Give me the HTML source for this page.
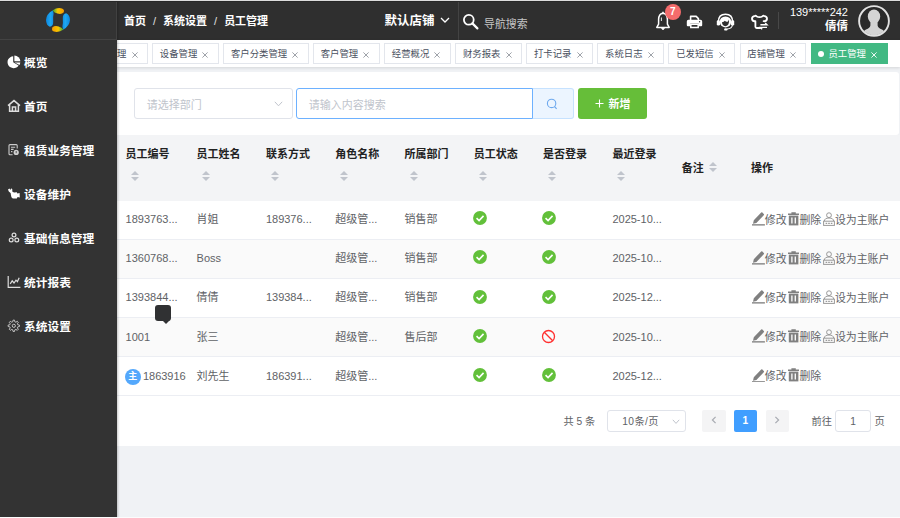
<!DOCTYPE html>
<html lang="zh-CN">
<head>
<meta charset="utf-8">
<title>员工管理</title>
<style>
*{box-sizing:border-box;margin:0;padding:0}
html,body{width:900px;height:518px;overflow:hidden;background:#f0f2f5;font-family:"Liberation Sans","Noto Sans CJK SC",sans-serif;font-size:12px;color:#606266}
#app{position:relative;width:900px;height:518px;overflow:hidden}
.abs{position:absolute}
/* sidebar */
#side{position:absolute;left:0;top:0;width:116.800px;height:518px;background:#333333;box-shadow:1px 0 2px rgba(0,0,0,.22);z-index:5}
#logo{position:absolute;left:0;top:0;width:116.800px;height:40px;border-bottom:1px solid #434343;border-right:1px solid #414141}
.mi{position:absolute;left:0;width:117px;height:20px;color:#fff;font-weight:bold;font-size:11.7px;line-height:20px;white-space:nowrap}
.mi svg{position:absolute;left:6.5px;top:2.8px}
.mi span{position:absolute;left:24.1px;top:1px}
/* header */
#head{position:absolute;left:117px;top:0;width:783px;height:40px;background:#2f2f2f;color:#fff}
#crumb{position:absolute;left:7px;top:0.900px;line-height:40px;font-size:11px;font-weight:bold;white-space:nowrap}
#crumb i{font-style:normal;margin:0 7px;font-weight:normal;color:#e0e0e0}

#shop{left:267.6px;top:1.600px;line-height:39px;font-size:12.500px;font-weight:bold;white-space:nowrap}
#shop svg{margin-left:5px;vertical-align:0.5px}
#navs{left:367px;top:4px;line-height:40px;font-size:10.900px;color:#c6c6c6;white-space:nowrap}
#badge{left:547.7px;top:3.700px;width:16px;height:16px;border-radius:8px;background:#f56c6c;color:#fff;font-size:10px;font-weight:bold;text-align:center;line-height:16px}
#uinfo{right:52px;top:5.600px;text-align:right;font-size:11px;line-height:13px;white-space:nowrap;color:#fff}
#uinfo .un{font-weight:bold;font-size:11.500px;line-height:15px;margin-top:0.600px}
/* tabs */
#tabs{position:absolute;left:117px;top:40px;width:783px;height:27px;overflow:hidden;background:#fff;box-shadow:0 1px 3px rgba(0,0,0,.12)}
.tab{position:absolute;top:3px;height:20.5px;border:1px solid #e3e6ec;background:#fff;color:#495060;font-size:9.4px;line-height:19px;padding-left:6.8px;white-space:nowrap}
.tab svg{position:absolute;right:9.4px;top:7.5px}
.tab.on{background:#42b983;border-color:#42b983;color:#fff}
/* card */
#card{position:absolute;left:100px;top:71.600px;width:799px;height:63px;background:#fff;border-radius:3px}
#tcard{position:absolute;left:117px;top:200.600px;width:783px;height:245px;background:#fff}
.inp{position:absolute;top:88px;height:31.300px;border:1px solid #e0e3ea;border-radius:3px;background:#fff;font-size:11px;color:#c0c4cc;line-height:32px;padding-left:11.700px;white-space:nowrap}
/* table */
#thead{position:absolute;left:117px;top:134.800px;width:783px;height:65.800px;background:#f3f4f6}
.th{position:absolute;font-size:11px;font-weight:bold;color:#222;white-space:nowrap;line-height:14px}
.row{position:absolute;left:117px;width:783px;height:39.150px;border-bottom:1px solid #eceef3;background:#fff}
.row.alt{background:#fafafa}
.td{position:absolute;top:-0.500px;line-height:39px;font-size:11px;color:#606266;white-space:nowrap}
.sort{position:absolute;width:8px;height:12px}
.sort:before,.sort:after{content:"";position:absolute;left:0;border:4px solid transparent}
.sort:before{top:-4.800px;border-bottom-color:#c0c4cc}
.sort:after{top:5.200px;border-top-color:#c0c4cc}

#sinp{border-color:#6db1ff;border-radius:3px 0 0 3px}
#sbtn{left:532.500px;top:88px;width:41px;height:31px;background:#ecf5ff;border:1px solid #c6e2ff;border-left:0;border-radius:0 3px 3px 0}
#sbtn svg{position:absolute;left:13px;top:9px}
#addb{left:577.500px;top:88px;width:69.700px;height:31.200px;background:#66be39;border-radius:3px;color:#fff;font-size:11px;font-weight:bold;line-height:33px;white-space:nowrap}
#addb svg{position:absolute;left:17.500px;top:11px}
#addb span{position:absolute;left:31px;top:0}
.tab u{display:inline-block;width:6px;height:6px;border-radius:3px;background:#fff;margin-right:4px;vertical-align:0}
.zhu{position:absolute;left:8px;top:12px;width:15.500px;height:15.500px;border-radius:8px;background:#54a8fc;color:#fff;font-size:9px;font-weight:bold;text-align:center;line-height:15px}
.op{font-size:10.900px;top:0.200px}
.op span{display:inline-block;margin-right:1.700px}
.oi{vertical-align:-1.800px}
#tip{left:155px;top:304.500px;width:15.500px;height:16px;background:#303133;border-radius:3px}
#tip:after{content:"";position:absolute;left:6.500px;top:15px;border:4px solid transparent;border-top-color:#303133}
#pager{left:0;top:0;font-size:10.200px;color:#606266;white-space:nowrap}
.pbox{border:1px solid #e0e3ea;border-radius:3px;line-height:21.400px;background:#fff}
.pbtn{top:410.100px;width:23.500px;height:21.800px;background:#f4f4f5;border-radius:2px;text-align:center;line-height:21px;font-weight:bold;color:#fff}
.pbtn.cur{background:#409eff}
.pbtn svg{vertical-align:0}
</style>
</head>
<body>
<div id="app">
<div id="side">
<div id="logo"><svg class="abs" style="left:44px;top:6px" width="28" height="28" viewBox="0 0 28 28">
<defs><linearGradient id="lg1" x1="0" y1="0" x2="1" y2="0"><stop offset="0" stop-color="#27a844"/><stop offset=".45" stop-color="#f7c600"/><stop offset="1" stop-color="#f79a00"/></linearGradient>
<linearGradient id="lb1" x1="0" y1="0" x2="1" y2="0"><stop offset="0" stop-color="#0d86de"/><stop offset=".6" stop-color="#1fa8f2"/><stop offset="1" stop-color="#0f8fe4"/></linearGradient><linearGradient id="lb2" x1="1" y1="0" x2="0" y2="0"><stop offset="0" stop-color="#0d86de"/><stop offset=".6" stop-color="#1fa8f2"/><stop offset="1" stop-color="#0f8fe4"/></linearGradient><linearGradient id="lg2" x1="0" y1="0" x2="1" y2="0"><stop offset="0" stop-color="#f79a00"/><stop offset=".55" stop-color="#f7c600"/><stop offset="1" stop-color="#27a844"/></linearGradient></defs>
<path d="M8.5 4.5Q13 1.2 18 2.4Q21 3.6 19.6 6.6Q17.6 8.6 13.4 7.6Q10.4 6.8 8.5 4.5Z" fill="url(#lg1)"/>
<path d="M19.6 23.5Q15 26.8 10 25.6Q7 24.4 8.4 21.4Q10.4 19.4 14.6 20.4Q17.6 21.2 19.6 23.5Z" fill="url(#lg2)"/>
<path d="M8.6 4.6Q2.4 8 2 14Q2.2 19.4 5.8 20.8Q9.4 20.6 9.2 15.6Q8.8 11 9.6 7.8Q9.6 5.8 8.6 4.6Z" fill="url(#lb1)"/>
<path d="M19.4 23.4Q25.6 20 26 14Q25.8 8.600 22.2 7.2Q18.600 7.400 18.8 12.4Q19.2 17 18.4 20.2Q18.4 22.2 19.4 23.4Z" fill="url(#lb2)"/>
</svg></div>
<div class="mi" style="top:52px"><svg width="14" height="14" viewBox="0 0 14 14"><path d="M6.2 1.2A6 6 0 1 0 11.6 10.4L6.2 7.2Z" fill="#fff"/><path d="M7.4 0.6A6 6 0 0 1 13.4 6.2H7.4Z" fill="#fff"/><path d="M7.6 7.4H13.3A6 6 0 0 1 12.5 9.9Z" fill="#fff"/></svg><span>概览</span></div>
<div class="mi" style="top:96px"><svg width="14" height="14" viewBox="0 0 14 14"><path d="M1 6.6L7 1.6L13 6.6M2.6 5.8V12.2H11.4V5.8M5.4 12.2V8H8.6V12.2" fill="none" stroke="#ddd" stroke-width="1.5"/></svg><span>首页</span></div>
<div class="mi" style="top:140px"><svg width="14" height="14" viewBox="0 0 14 14"><path d="M10.2 5.4V2.6Q10.2 1.6 9.2 1.6H3Q2 1.6 2 2.6V10.8Q2 11.8 3 11.8H5.6M4 4.2H8.2M4 6.4H6.6M4 8.6H5.4" fill="none" stroke="#ccc" stroke-width="1.1"/><circle cx="9.200" cy="9.400" r="2.600" fill="#d0d0d0"/><path d="M9.200 8V10.200" stroke="#444" stroke-width="0.900"/></svg><span>租赁业务管理</span></div>
<div class="mi" style="top:184px"><svg width="14" height="14" viewBox="0 0 14 14"><path d="M1 2.600L2.400 1.400L3.400 3L4.200 1.200L5.400 2.400L5.200 4.400L7 5.400L9.800 5.200L10.400 6.400L12.600 6L12.800 10.400L10.600 10L9.800 11.400H5.800Q4 10.600 4 8.200L3.600 6L1.800 4.600Z" fill="#fff"/></svg><span>设备维护</span></div>
<div class="mi" style="top:228px"><svg width="14" height="14" viewBox="0 0 14 14"><circle cx="7" cy="4" r="1.900" fill="none" stroke="#ddd" stroke-width="1.200"/><circle cx="4.200" cy="9" r="1.900" fill="none" stroke="#ddd" stroke-width="1.200"/><circle cx="9.800" cy="9" r="1.900" fill="none" stroke="#ddd" stroke-width="1.200"/></svg><span>基础信息管理</span></div>
<div class="mi" style="top:272px"><svg width="14" height="14" viewBox="0 0 14 14"><path d="M1.2 1V12.4H13.4M3.200 8.800L5.200 5.800L7 8L9 5.200L10.400 6.600L12.200 2.800" fill="none" stroke="#ddd" stroke-width="1.2"/></svg><span>统计报表</span></div>
<div class="mi" style="top:316px"><svg width="14" height="14" viewBox="0 0 14 14"><path d="M6.09 1.14L7.51 1.14L7.88 2.85L8.83 3.24L10.29 2.30L11.30 3.31L10.36 4.77L10.75 5.72L12.46 6.09L12.46 7.51L10.75 7.88L10.36 8.83L11.30 10.29L10.29 11.30L8.83 10.36L7.88 10.75L7.51 12.46L6.09 12.46L5.72 10.75L4.77 10.36L3.31 11.30L2.30 10.29L3.24 8.83L2.85 7.88L1.14 7.51L1.14 6.09L2.85 5.72L3.24 4.77L2.30 3.31L3.31 2.30L4.77 3.24L5.72 2.85Z" fill="none" stroke="#c4c4c4" stroke-width="1" stroke-linejoin="round"/><circle cx="6.800" cy="6.800" r="1.600" fill="none" stroke="#c4c4c4" stroke-width="1"/></svg><span>系统设置</span></div>

</div>
<div id="head">
<div id="crumb">首页<i>/</i>系统设置<i>/</i>员工管理</div>
<div class="abs" id="shop">默认店铺<svg width="10" height="8" viewBox="0 0 10 8"><path d="M1 2L5 6L9 2" fill="none" stroke="#fff" stroke-width="1.3"/></svg></div>
<div class="abs" style="left:341px;top:0;width:1px;height:40px;background:#434343"></div>
<svg class="abs" style="left:345px;top:13px" width="17" height="17" viewBox="0 0 17 17"><circle cx="6.8" cy="6.8" r="4.9" fill="none" stroke="#fff" stroke-width="1.8"/><path d="M10.4 10.4L15.4 15.4" stroke="#fff" stroke-width="2.2" stroke-linecap="round"/></svg>
<div class="abs" id="navs">导航搜索</div>
<svg class="abs" style="left:537px;top:11px" width="18" height="21" viewBox="0 0 18 21"><path d="M9 2.2Q13.200 2.600 13.4 8.400V13.200L15.2 16.400H2.800L4.600 13.200V8.400Q4.800 2.600 9 2.200Z" fill="none" stroke="#fff" stroke-width="1.5" stroke-linejoin="round"/><path d="M7.600 17.600Q9 19.400 10.400 17.600Z" fill="#fff" stroke="#fff" stroke-width="1"/><path d="M9 0.800V2.400" stroke="#fff" stroke-width="1.6"/><path d="M7.400 6.500V10" stroke="#fff" stroke-width="0.900"/></svg>
<div class="abs" id="badge">7</div>
<svg class="abs" style="left:569px;top:14px" width="17" height="16" viewBox="0 0 17 16"><path d="M4.600 6V2.400H10.200L12.400 4.600V6" fill="none" stroke="#fff" stroke-width="1.600" stroke-linejoin="round"/><path d="M2.400 5.800H14.600Q16.200 5.800 16.200 7.400V11.200Q16.200 12.200 15.200 12.200H12.800V9.600H4.200V12.200H1.800Q0.800 12.200 0.800 11.200V7.400Q0.800 5.800 2.400 5.800Z" fill="#fff"/><path d="M4.800 10.200H12.200V13.600H4.800Z" fill="none" stroke="#fff" stroke-width="1.500"/><circle cx="13.600" cy="7.800" r="0.700" fill="#2f2f2f"/></svg>
<svg class="abs" style="left:599px;top:12px" width="19" height="20" viewBox="0 0 19 20"><path d="M2.400 9.800Q2.400 2.200 9.500 2.200Q16.600 2.200 16.600 9.800" fill="none" stroke="#fff" stroke-width="1.500"/><path d="M3.800 9.600Q4 4.600 9.500 4.400Q15 4.600 15.200 9.600Q15 15 9.500 15.400Q4 15 3.800 9.600Z" fill="#fff"/><path d="M6 10.200Q8 10.200 8.800 8.800Q10.400 10.200 12 9.400L13 7.600Q13.600 13.600 9.500 14.200Q6 13.800 6 10.200Z" fill="#2f2f2f"/><rect x="0.800" y="8.200" width="3.200" height="5.400" rx="1.400" fill="#fff"/><rect x="15" y="8.200" width="3.200" height="5.400" rx="1.400" fill="#fff"/><path d="M16.400 13Q16 16.600 11 17" fill="none" stroke="#fff" stroke-width="1.100"/><ellipse cx="9.800" cy="17.400" rx="1.700" ry="1.200" fill="#fff"/></svg>
<svg class="abs" style="left:633px;top:13px" width="19" height="18" viewBox="0 0 19 18"><path d="M10.200 15H6.600Q5.400 15 5.400 13.800V8.200Q2.400 8.600 2 6Q1.800 3.200 5 2.800Q5.800 2.600 6.400 3.200Q9.500 5.200 12.600 3.200Q13.200 2.600 14 2.800Q17.200 3.200 17 6Q16.600 8.600 13.600 8.200" fill="none" stroke="#fff" stroke-width="1.800" stroke-linejoin="round" stroke-linecap="round"/><path d="M10.400 11.800H17L15.200 10M17 14.400H10.400L12.200 16.200" fill="none" stroke="#fff" stroke-width="1.400"/></svg>
<div class="abs" style="left:661px;top:12px;width:1px;height:17px;background:#484848"></div>
<div class="abs" id="uinfo"><div>139*****242</div><div class="un">倩倩</div></div>
<svg class="abs" style="left:741px;top:4.800px" width="32" height="32" viewBox="0 0 32 32"><defs><clipPath id="avc"><circle cx="16" cy="16" r="14.200"/></clipPath></defs><circle cx="16" cy="16" r="14.900" fill="#2a2a2a" stroke="#e2e2e2" stroke-width="1.900"/><g clip-path="url(#avc)" fill="#d4d4d4"><ellipse cx="16" cy="11.400" rx="6.200" ry="6.900"/><path d="M12.400 15H19.600V20.400Q20 22.800 24 24.400Q27.200 25.800 27.600 31H4.400Q4.800 25.800 8 24.400Q12 22.800 12.400 20.400Z"/></g></svg>
</div>
<div id="tabs">
<div class="tab" style="left:-54.6px;width:85.5px">设备分类管理<svg width="6" height="6" viewBox="0 0 6 6"><path d="M0.400 0.400L5.600 5.600M5.600 0.400L0.400 5.600" stroke="#8e9299" stroke-width="0.850"/></svg></div>
<div class="tab" style="left:35.0px;width:66.8px">设备管理<svg width="6" height="6" viewBox="0 0 6 6"><path d="M0.400 0.400L5.600 5.600M5.600 0.400L0.400 5.600" stroke="#8e9299" stroke-width="0.850"/></svg></div>
<div class="tab" style="left:106.1px;width:85.5px">客户分类管理<svg width="6" height="6" viewBox="0 0 6 6"><path d="M0.400 0.400L5.600 5.600M5.600 0.400L0.400 5.600" stroke="#8e9299" stroke-width="0.850"/></svg></div>
<div class="tab" style="left:195.9px;width:66.8px">客户管理<svg width="6" height="6" viewBox="0 0 6 6"><path d="M0.400 0.400L5.600 5.600M5.600 0.400L0.400 5.600" stroke="#8e9299" stroke-width="0.850"/></svg></div>
<div class="tab" style="left:267.0px;width:66.8px">经营概况<svg width="6" height="6" viewBox="0 0 6 6"><path d="M0.400 0.400L5.600 5.600M5.600 0.400L0.400 5.600" stroke="#8e9299" stroke-width="0.850"/></svg></div>
<div class="tab" style="left:338.1px;width:66.8px">财务报表<svg width="6" height="6" viewBox="0 0 6 6"><path d="M0.400 0.400L5.600 5.600M5.600 0.400L0.400 5.600" stroke="#8e9299" stroke-width="0.850"/></svg></div>
<div class="tab" style="left:409.2px;width:66.8px">打卡记录<svg width="6" height="6" viewBox="0 0 6 6"><path d="M0.400 0.400L5.600 5.600M5.600 0.400L0.400 5.600" stroke="#8e9299" stroke-width="0.850"/></svg></div>
<div class="tab" style="left:480.3px;width:66.8px">系统日志<svg width="6" height="6" viewBox="0 0 6 6"><path d="M0.400 0.400L5.600 5.600M5.600 0.400L0.400 5.600" stroke="#8e9299" stroke-width="0.850"/></svg></div>
<div class="tab" style="left:551.4px;width:66.8px">已发短信<svg width="6" height="6" viewBox="0 0 6 6"><path d="M0.400 0.400L5.600 5.600M5.600 0.400L0.400 5.600" stroke="#8e9299" stroke-width="0.850"/></svg></div>
<div class="tab" style="left:622.5px;width:66.8px">店铺管理<svg width="6" height="6" viewBox="0 0 6 6"><path d="M0.400 0.400L5.600 5.600M5.600 0.400L0.400 5.600" stroke="#8e9299" stroke-width="0.850"/></svg></div>
<div class="tab on" style="left:693.6px;width:77.2px"><u></u>员工管理<svg width="6" height="6" viewBox="0 0 6 6"><path d="M0.400 0.400L5.600 5.600M5.600 0.400L0.400 5.600" stroke="#fff" stroke-width="0.900"/></svg></div>
</div>
<div id="card"></div><div id="tcard"></div>
<div class="inp" style="left:134px;width:158.500px">请选择部门<svg class="abs" style="right:9px;top:12px" width="9" height="6" viewBox="0 0 9 6"><path d="M0.800 0.800L4.500 4.800L8.200 0.800" fill="none" stroke="#c0c4cc" stroke-width="1"/></svg></div>
<div class="inp" id="sinp" style="left:296px;width:237px">请输入内容搜索</div>
<div class="abs" id="sbtn"><svg width="12" height="12" viewBox="0 0 12 12"><circle cx="5.600" cy="5.400" r="4.200" fill="none" stroke="#6ea9ee" stroke-width="1.100"/><path d="M8.600 8.600L10.600 10.800" stroke="#6ea9ee" stroke-width="1.200"/></svg></div>
<div class="abs" id="addb"><svg width="9" height="9" viewBox="0 0 9 9"><path d="M4.500 0.500V8.500M0.500 4.500H8.500" stroke="#fff" stroke-width="1.100"/></svg><span>新增</span></div>
<div id="thead">
<div class="th" style="left:8.6px;top:12px">员工编号</div><div class="sort" style="left:13.6px;top:37px"></div>
<div class="th" style="left:79.6px;top:12px">员工姓名</div><div class="sort" style="left:84.6px;top:37px"></div>
<div class="th" style="left:148.9px;top:12px">联系方式</div><div class="sort" style="left:153.9px;top:37px"></div>
<div class="th" style="left:218.2px;top:12px">角色名称</div><div class="sort" style="left:223.2px;top:37px"></div>
<div class="th" style="left:287.5px;top:12px">所属部门</div><div class="sort" style="left:292.5px;top:37px"></div>
<div class="th" style="left:356.8px;top:12px">员工状态</div><div class="sort" style="left:361.8px;top:37px"></div>
<div class="th" style="left:426.1px;top:12px">是否登录</div><div class="sort" style="left:431.1px;top:37px"></div>
<div class="th" style="left:495.4px;top:12px">最近登录</div><div class="sort" style="left:500.4px;top:37px"></div>
<div class="th" style="left:564.7px;top:26px">备注</div><div class="sort" style="left:591.7px;top:28.200px"></div>
<div class="th" style="left:634.0px;top:26px">操作</div>
</div>
<div class="row" style="top:200.60px"><div class="td" style="left:8.6px">1893763...</div><div class="td" style="left:79.6px">肖姐</div><div class="td" style="left:148.9px">189376...</div><div class="td" style="left:218.2px">超级管...</div><div class="td" style="left:287.5px">销售部</div><svg class="abs ic" style="left:355.9px;top:10.700px" width="14" height="14" viewBox="0 0 15 15"><circle cx="7.500" cy="7.500" r="7.400" fill="#62c03a"/><path d="M3.800 7.700L6.500 10.300L11.300 5.200" fill="none" stroke="#fff" stroke-width="1.700"/></svg><svg class="abs ic" style="left:425.1px;top:10.700px" width="14" height="14" viewBox="0 0 15 15"><circle cx="7.500" cy="7.500" r="7.400" fill="#62c03a"/><path d="M3.800 7.700L6.500 10.300L11.300 5.200" fill="none" stroke="#fff" stroke-width="1.700"/></svg><div class="td" style="left:495.4px">2025-10...</div><div class="td op" style="left:634.900px"><span><svg class="oi" width="12.900" height="14.600" viewBox="0 0 12.900 14" preserveAspectRatio="none"><path d="M1.800 8.800L9.200 1.400Q9.800 0.800 10.400 1.400L11.800 2.800Q12.400 3.400 11.800 4L4.400 11.400L1 12.200Z" fill="#808080"/><path d="M0 13.300H12.900" stroke="#808080" stroke-width="1.300"/></svg>修改</span><span><svg class="oi" width="11.200" height="14" viewBox="0 0 11.200 14"><path d="M0 2.300H11.200M3.400 0.900H7.800" stroke="#808080" stroke-width="1.500"/><path d="M0.800 3.600H10.400V13.400H0.800Z" fill="#808080"/><path d="M3.900 5.400V11.600M7.300 5.400V11.600" stroke="#fff" stroke-width="1.300"/></svg>删除</span><span><svg class="oi" width="12" height="14" viewBox="0 0 12 14"><circle cx="6" cy="3.200" r="2.400" fill="none" stroke="#999" stroke-width="1"/><path d="M1.400 9Q1.600 6 6 6Q10.400 6 10.600 9" fill="none" stroke="#999" stroke-width="1"/><rect x="0.600" y="9.200" width="10.800" height="4.200" fill="none" stroke="#999" stroke-width="1"/><path d="M2.600 11.300H4.200M5.200 11.300H6.800M7.800 11.300H9.400" stroke="#999" stroke-width="1.300"/></svg>设为主账户</span></div></div>
<div class="row alt" style="top:239.75px"><div class="td" style="left:8.6px">1360768...</div><div class="td" style="left:79.6px">Boss</div><div class="td" style="left:218.2px">超级管...</div><div class="td" style="left:287.5px">销售部</div><svg class="abs ic" style="left:355.9px;top:10.700px" width="14" height="14" viewBox="0 0 15 15"><circle cx="7.500" cy="7.500" r="7.400" fill="#62c03a"/><path d="M3.800 7.700L6.500 10.300L11.300 5.200" fill="none" stroke="#fff" stroke-width="1.700"/></svg><svg class="abs ic" style="left:425.1px;top:10.700px" width="14" height="14" viewBox="0 0 15 15"><circle cx="7.500" cy="7.500" r="7.400" fill="#62c03a"/><path d="M3.800 7.700L6.500 10.300L11.300 5.200" fill="none" stroke="#fff" stroke-width="1.700"/></svg><div class="td" style="left:495.4px">2025-10...</div><div class="td op" style="left:634.900px"><span><svg class="oi" width="12.900" height="14.600" viewBox="0 0 12.900 14" preserveAspectRatio="none"><path d="M1.800 8.800L9.200 1.400Q9.800 0.800 10.400 1.400L11.800 2.800Q12.400 3.400 11.800 4L4.400 11.400L1 12.200Z" fill="#808080"/><path d="M0 13.300H12.900" stroke="#808080" stroke-width="1.300"/></svg>修改</span><span><svg class="oi" width="11.200" height="14" viewBox="0 0 11.200 14"><path d="M0 2.300H11.200M3.400 0.900H7.800" stroke="#808080" stroke-width="1.500"/><path d="M0.800 3.600H10.400V13.400H0.800Z" fill="#808080"/><path d="M3.900 5.400V11.600M7.300 5.400V11.600" stroke="#fff" stroke-width="1.300"/></svg>删除</span><span><svg class="oi" width="12" height="14" viewBox="0 0 12 14"><circle cx="6" cy="3.200" r="2.400" fill="none" stroke="#999" stroke-width="1"/><path d="M1.400 9Q1.600 6 6 6Q10.400 6 10.600 9" fill="none" stroke="#999" stroke-width="1"/><rect x="0.600" y="9.200" width="10.800" height="4.200" fill="none" stroke="#999" stroke-width="1"/><path d="M2.600 11.300H4.200M5.200 11.300H6.800M7.800 11.300H9.400" stroke="#999" stroke-width="1.300"/></svg>设为主账户</span></div></div>
<div class="row" style="top:278.90px"><div class="td" style="left:8.6px">1393844...</div><div class="td" style="left:79.6px">倩倩</div><div class="td" style="left:148.9px">139384...</div><div class="td" style="left:218.2px">超级管...</div><div class="td" style="left:287.5px">销售部</div><svg class="abs ic" style="left:355.9px;top:10.700px" width="14" height="14" viewBox="0 0 15 15"><circle cx="7.500" cy="7.500" r="7.400" fill="#62c03a"/><path d="M3.800 7.700L6.500 10.300L11.300 5.200" fill="none" stroke="#fff" stroke-width="1.700"/></svg><svg class="abs ic" style="left:425.1px;top:10.700px" width="14" height="14" viewBox="0 0 15 15"><circle cx="7.500" cy="7.500" r="7.400" fill="#62c03a"/><path d="M3.800 7.700L6.500 10.300L11.300 5.200" fill="none" stroke="#fff" stroke-width="1.700"/></svg><div class="td" style="left:495.4px">2025-12...</div><div class="td op" style="left:634.900px"><span><svg class="oi" width="12.900" height="14.600" viewBox="0 0 12.900 14" preserveAspectRatio="none"><path d="M1.800 8.800L9.200 1.400Q9.800 0.800 10.400 1.400L11.800 2.800Q12.400 3.400 11.800 4L4.400 11.400L1 12.200Z" fill="#808080"/><path d="M0 13.300H12.900" stroke="#808080" stroke-width="1.300"/></svg>修改</span><span><svg class="oi" width="11.200" height="14" viewBox="0 0 11.200 14"><path d="M0 2.300H11.200M3.400 0.900H7.800" stroke="#808080" stroke-width="1.500"/><path d="M0.800 3.600H10.400V13.400H0.800Z" fill="#808080"/><path d="M3.900 5.400V11.600M7.300 5.400V11.600" stroke="#fff" stroke-width="1.300"/></svg>删除</span><span><svg class="oi" width="12" height="14" viewBox="0 0 12 14"><circle cx="6" cy="3.200" r="2.400" fill="none" stroke="#999" stroke-width="1"/><path d="M1.400 9Q1.600 6 6 6Q10.400 6 10.600 9" fill="none" stroke="#999" stroke-width="1"/><rect x="0.600" y="9.200" width="10.800" height="4.200" fill="none" stroke="#999" stroke-width="1"/><path d="M2.600 11.300H4.200M5.200 11.300H6.800M7.800 11.300H9.400" stroke="#999" stroke-width="1.300"/></svg>设为主账户</span></div></div>
<div class="row alt" style="top:318.05px"><div class="td" style="left:8.6px">1001</div><div class="td" style="left:79.6px">张三</div><div class="td" style="left:218.2px">超级管...</div><div class="td" style="left:287.5px">售后部</div><svg class="abs ic" style="left:355.9px;top:10.700px" width="14" height="14" viewBox="0 0 15 15"><circle cx="7.500" cy="7.500" r="7.400" fill="#62c03a"/><path d="M3.800 7.700L6.500 10.300L11.300 5.200" fill="none" stroke="#fff" stroke-width="1.700"/></svg><svg class="abs ic" style="left:424.3px;top:10.850px" width="15" height="15" viewBox="0 0 15 15"><circle cx="7.500" cy="7.500" r="6" fill="none" stroke="#ff3030" stroke-width="1.300"/><path d="M3.300 3.300L11.700 11.700" stroke="#ff3030" stroke-width="1.300"/></svg><div class="td" style="left:495.4px">2025-10...</div><div class="td op" style="left:634.900px"><span><svg class="oi" width="12.900" height="14.600" viewBox="0 0 12.900 14" preserveAspectRatio="none"><path d="M1.800 8.800L9.200 1.400Q9.800 0.800 10.400 1.400L11.800 2.800Q12.400 3.400 11.800 4L4.400 11.400L1 12.200Z" fill="#808080"/><path d="M0 13.300H12.900" stroke="#808080" stroke-width="1.300"/></svg>修改</span><span><svg class="oi" width="11.200" height="14" viewBox="0 0 11.200 14"><path d="M0 2.300H11.200M3.400 0.900H7.800" stroke="#808080" stroke-width="1.500"/><path d="M0.800 3.600H10.400V13.400H0.800Z" fill="#808080"/><path d="M3.900 5.400V11.600M7.300 5.400V11.600" stroke="#fff" stroke-width="1.300"/></svg>删除</span><span><svg class="oi" width="12" height="14" viewBox="0 0 12 14"><circle cx="6" cy="3.200" r="2.400" fill="none" stroke="#999" stroke-width="1"/><path d="M1.400 9Q1.600 6 6 6Q10.400 6 10.600 9" fill="none" stroke="#999" stroke-width="1"/><rect x="0.600" y="9.200" width="10.800" height="4.200" fill="none" stroke="#999" stroke-width="1"/><path d="M2.600 11.300H4.200M5.200 11.300H6.800M7.800 11.300H9.400" stroke="#999" stroke-width="1.300"/></svg>设为主账户</span></div></div>
<div class="row" style="top:357.20px"><div class="zhu">主</div><div class="td" style="left:25.9px;width:43.500px;overflow:hidden">18639160</div><div class="td" style="left:79.6px">刘先生</div><div class="td" style="left:148.9px">186391...</div><div class="td" style="left:218.2px">超级管...</div><svg class="abs ic" style="left:355.9px;top:10.700px" width="14" height="14" viewBox="0 0 15 15"><circle cx="7.500" cy="7.500" r="7.400" fill="#62c03a"/><path d="M3.800 7.700L6.500 10.300L11.300 5.200" fill="none" stroke="#fff" stroke-width="1.700"/></svg><svg class="abs ic" style="left:425.1px;top:10.700px" width="14" height="14" viewBox="0 0 15 15"><circle cx="7.500" cy="7.500" r="7.400" fill="#62c03a"/><path d="M3.800 7.700L6.500 10.300L11.300 5.200" fill="none" stroke="#fff" stroke-width="1.700"/></svg><div class="td" style="left:495.4px">2025-12...</div><div class="td op" style="left:634.900px"><span><svg class="oi" width="12.900" height="14.600" viewBox="0 0 12.900 14" preserveAspectRatio="none"><path d="M1.800 8.800L9.200 1.400Q9.800 0.800 10.400 1.400L11.800 2.800Q12.400 3.400 11.800 4L4.400 11.400L1 12.200Z" fill="#808080"/><path d="M0 13.300H12.900" stroke="#808080" stroke-width="1.300"/></svg>修改</span><span><svg class="oi" width="11.200" height="14" viewBox="0 0 11.200 14"><path d="M0 2.300H11.200M3.400 0.900H7.800" stroke="#808080" stroke-width="1.500"/><path d="M0.800 3.600H10.400V13.400H0.800Z" fill="#808080"/><path d="M3.900 5.400V11.600M7.300 5.400V11.600" stroke="#fff" stroke-width="1.300"/></svg>删除</span></div></div>
<div class="abs" id="tip"></div>
<div class="abs" id="pager">
<div class="abs" style="left:563.500px;top:410.900px;line-height:22px">共 5 条</div>
<div class="abs pbox" style="left:607.300px;top:410.100px;width:78.300px;height:21.800px;padding-left:14px;letter-spacing:0.400px">10条/页<svg class="abs" style="right:5px;top:8px" width="8" height="6" viewBox="0 0 8 6"><path d="M0.800 0.800L4 4.400L7.200 0.800" fill="none" stroke="#c0c4cc" stroke-width="1"/></svg></div>
<div class="abs pbtn" style="left:702px"><svg width="6" height="8" viewBox="0 0 6 8"><path d="M4.600 0.800L1.400 4L4.600 7.200" fill="none" stroke="#a8abb2" stroke-width="1.200"/></svg></div>
<div class="abs pbtn cur" style="left:733.500px">1</div>
<div class="abs pbtn" style="left:765.500px"><svg width="6" height="8" viewBox="0 0 6 8"><path d="M1.400 0.800L4.600 4L1.400 7.200" fill="none" stroke="#a8abb2" stroke-width="1.200"/></svg></div>
<div class="abs" style="left:811.500px;top:410.900px;line-height:22px">前往</div>
<div class="abs pbox" style="left:835px;top:410.100px;width:36px;height:21.800px;text-align:center">1</div>
<div class="abs" style="left:874.500px;top:411.400px;line-height:22px">页</div>
</div>

<div class="abs" style="left:0;top:0;width:900px;height:1px;background:#dcdcdc;z-index:9"></div>
<div class="abs" style="left:0;top:1px;width:900px;height:1px;background:#272727;z-index:9"></div>
<div class="abs" style="left:0;top:516.5px;width:900px;height:1.5px;background:#fcfcfc;z-index:9"></div>
</div>
</body>
</html>
